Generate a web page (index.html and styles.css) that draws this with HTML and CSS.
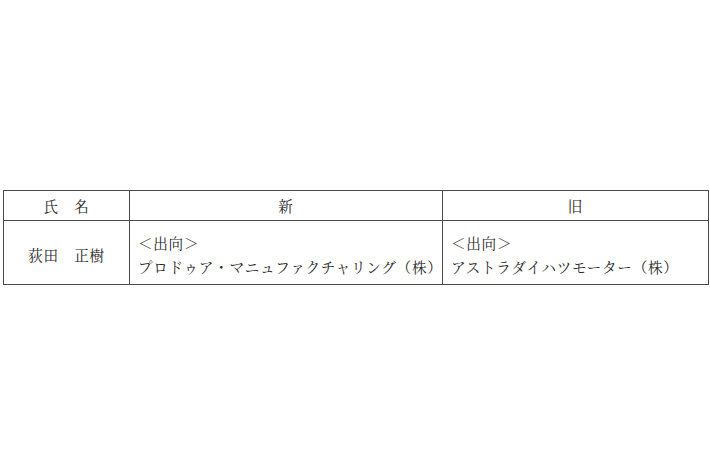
FILE: index.html
```html
<!DOCTYPE html>
<html lang="ja">
<head>
<meta charset="utf-8">
<link rel="stylesheet" href="styles.css">
</head>
<body>
<table class="personnel">
  <colgroup>
    <col class="c-name">
    <col class="c-new">
    <col class="c-old">
  </colgroup>
  <thead>
    <tr>
      <th>氏　名</th>
      <th>新</th>
      <th>旧</th>
    </tr>
  </thead>
  <tbody>
    <tr>
      <td class="name">荻田　正樹</td>
      <td class="post">＜出向＞<br>プロドゥア・マニュファクチャリング（株）</td>
      <td class="post">＜出向＞<br>アストラダイハツモーター（株）</td>
    </tr>
  </tbody>
</table>
</body>
</html>
```

FILE: styles.css
```css
html, body {
  margin: 0;
  padding: 0;
  background: #ffffff;
}
body {
  padding: 190px 0 0 3px;
  font-family: "Noto Serif CJK JP", "Noto Sans CJK JP", serif;
  color: #2a2a2a;
}
.personnel {
  border-collapse: collapse;
  table-layout: fixed;
  width: 705px;
  font-size: 14.6px;
  letter-spacing: 0.7px;
}
.c-name { width: 126px; }
.c-new { width: 313px; }
.c-old { width: 266px; }
.personnel th,
.personnel td {
  border: 1px solid #4a4a4a;
  padding: 0;
}
.personnel th {
  height: 29px;
  font-weight: normal;
  text-align: center;
  vertical-align: middle;
  line-height: 20px;
}
.personnel td {
  height: 48px;
  vertical-align: top;
}
.personnel td.name {
  text-align: center;
  vertical-align: middle;
  padding-top: 3px;
}
.personnel td.post {
  padding: 10px 0 5px 8px;
  line-height: 24px;
  white-space: nowrap;
}
```
